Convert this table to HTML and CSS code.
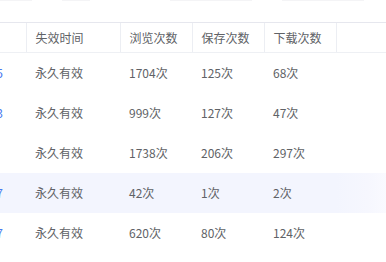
FILE: index.html
```html
<!DOCTYPE html>
<html lang="zh-CN">
<head>
<meta charset="utf-8">
<link rel="stylesheet" href="styles.css">
</head>
<body>
<div class="top">
  <span class="smudge s1"></span>
  <span class="smudge s2"></span>
  <span class="smudge s3"></span>
  <span class="smudge s4"></span>
</div>
<div class="viewport">
  <table class="grid">
    <colgroup>
      <col class="c0"><col class="c1"><col class="c2"><col class="c3"><col class="c4"><col class="c5">
    </colgroup>
    <thead>
      <tr>
        <th></th>
        <th>失效时间</th>
        <th>浏览次数</th>
        <th>保存次数</th>
        <th>下载次数</th>
        <th></th>
      </tr>
    </thead>
    <tbody>
      <tr>
        <td class="lead"><span class="link">05-15</span></td>
        <td>永久有效</td><td>1704次</td><td>125次</td><td>68次</td><td></td>
      </tr>
      <tr>
        <td class="lead"><span class="link">05-13</span></td>
        <td>永久有效</td><td>999次</td><td>127次</td><td>47次</td><td></td>
      </tr>
      <tr>
        <td class="lead"></td>
        <td>永久有效</td><td>1738次</td><td>206次</td><td>297次</td><td></td>
      </tr>
      <tr class="hover">
        <td class="lead"><span class="link">05-17</span></td>
        <td>永久有效</td><td>42次</td><td>1次</td><td>2次</td><td></td>
      </tr>
      <tr>
        <td class="lead"><span class="link">05-07</span></td>
        <td>永久有效</td><td>620次</td><td>80次</td><td>124次</td><td></td>
      </tr>
    </tbody>
  </table>
</div>
</body>
</html>
```
FILE: styles.css
```css
html, body {
  margin: 0;
  padding: 0;
  background: #ffffff;
}
body {
  font-family: "Noto Sans CJK SC", "Noto Sans", sans-serif;
  font-size: 12px;
  color: #606266;
  width: 386px;
  height: 262px;
  overflow: hidden;
}
.top {
  height: 22px;
  display: flex;
  align-items: flex-start;
}
.smudge {
  display: block;
  height: 1px;
  background: #f4f4f6;
}
.s1 { width: 32px; }
.s2 { width: 28px; margin-left: 30px; }
.s3 { width: 82px; margin-left: 80px; }
.s4 { width: 82px; margin-left: 30px; }
.viewport {
  width: 386px;
  overflow: hidden;
}
.grid {
  border-collapse: collapse;
  table-layout: fixed;
  width: 460px;
  margin-left: -60px;
}
.c0 { width: 86px; }
.c1 { width: 94px; }
.c2 { width: 72px; }
.c3 { width: 72px; }
.c4 { width: 72px; }
.c5 { width: 64px; }
th, td {
  padding: 0 9px;
  text-align: left;
  white-space: nowrap;
  overflow: hidden;
  line-height: 16px;
}
th {
  height: 29px;
  font-weight: normal;
  color: #606266;
  border-top: 1px solid #e6e7ee;
  border-bottom: 1px solid #eef0f4;
  border-left: 1px solid #eceef3;
}
th:first-child {
  border-left: none;
}
td {
  height: 40px;
}
td.lead {
  text-align: right;
  padding-right: 23px;
}
.link {
  color: #4a7bf0;
}
tr.hover td {
  background: #f3f5fe;
}
tr.hover td:last-child {
  background: linear-gradient(to right, #f3f5fe 0%, #f6f7fe 50%, #fcfcff 100%);
}
```
